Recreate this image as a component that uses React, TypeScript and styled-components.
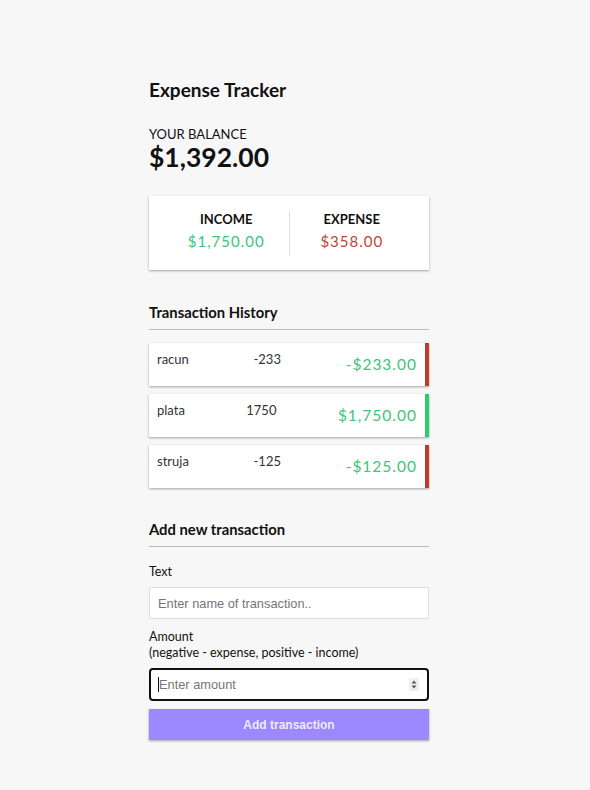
import React from "react";
import styled, { createGlobalStyle } from "styled-components";

const GlobalStyle = createGlobalStyle`
  html, body { margin: 0; padding: 0; }
  body {
    background-color: #f7f7f7;
    font-family: Lato, "Liberation Sans", sans-serif;
    color: #111;
  }
  * { box-sizing: border-box; }
`;

const Page = styled.div`
  display: flex;
  justify-content: center;
  padding: 79px 12px 50px 0;
  min-height: 790px;
`;

const Container = styled.div`
  width: 280px;
  display: flex;
  flex-direction: column;
`;

const Title = styled.h1`
  margin: 0;
  font-size: 19px;
  line-height: 22px;
  font-weight: 700;
  color: #111;
`;

const BalanceLabel = styled.h4`
  margin: 25px 0 0;
  font-size: 13px;
  line-height: 16px;
  font-weight: 400;
  text-transform: uppercase;
  color: #111;
`;

const Balance = styled.h2`
  margin: 0;
  font-size: 26.5px;
  line-height: 30px;
  font-weight: 700;
  color: #111;
`;

const Card = styled.div`
  margin-top: 24px;
  background: #fff;
  box-shadow: 0 1px 3px rgba(0, 0, 0, 0.12), 0 1px 2px rgba(0, 0, 0, 0.24);
  padding: 15px 15px 14px;
  display: flex;
`;

const Column = styled.div<{ $divider?: boolean }>`
  flex: 1;
  text-align: center;
  border-right: ${(p) => (p.$divider ? "1px solid #dedede" : "none")};
`;

const ColumnLabel = styled.h4`
  margin: 0;
  font-size: 13px;
  line-height: 17px;
  font-weight: 700;
  text-transform: uppercase;
  color: #111;
`;

const Money = styled.p<{ $type: "plus" | "minus" }>`
  margin: 4px 0 6px;
  font-size: 15px;
  line-height: 18px;
  letter-spacing: 1px;
  color: ${(p) => (p.$type === "plus" ? "#3cc57a" : "#bd4538")};
`;

const SectionTitle = styled.h3<{ $top: number }>`
  margin: ${(p) => p.$top}px 0 0;
  font-size: 14.8px;
  line-height: 17px;
  font-weight: 700;
  padding-bottom: 8px;
  border-bottom: 1px solid #bbb;
  color: #111;
`;

const List = styled.ul`
  list-style: none;
  padding: 0;
  margin: 13px 0 0;
  display: flex;
  flex-direction: column;
  gap: 8px;
`;

const Item = styled.li<{ $type: "plus" | "minus" }>`
  height: 43px;
  background: #fff;
  box-shadow: 0 1px 3px rgba(0, 0, 0, 0.12), 0 1px 2px rgba(0, 0, 0, 0.24);
  color: #333;
  display: flex;
  justify-content: space-between;
  align-items: flex-start;
  padding: 8px;
  border-right: 4px solid ${(p) => (p.$type === "plus" ? "#2ecc71" : "#c0392b")};
`;

const ItemText = styled.span`
  font-size: 13px;
  line-height: 16px;
  color: #333;
`;

const ItemAmount = styled.span`
  margin-top: 4px;
  font-size: 15.5px;
  line-height: 19px;
  letter-spacing: 1px;
  color: #3cc57a;
`;

const Form = styled.form`
  display: flex;
  flex-direction: column;
`;

const Label = styled.label<{ $top: number }>`
  display: block;
  margin-top: ${(p) => p.$top}px;
  font-size: 12.5px;
  line-height: 16px;
  color: #111;
`;

const TextInput = styled.input`
  display: block;
  width: 100%;
  height: 32px;
  margin-top: 7px;
  border: 1px solid #dedede;
  border-radius: 2px;
  background: #fff;
  padding: 0 8px;
  font-family: "Liberation Sans", Arial, sans-serif;
  font-size: 12.8px;
  color: #111;
  outline: none;
  &::placeholder { color: #757575; }
`;

const NumberWrap = styled.div`
  position: relative;
  margin-top: 7px;
`;

const NumberInput = styled.input`
  display: block;
  width: 100%;
  height: 33px;
  border: 2px solid #101010;
  border-radius: 4px;
  background: #fff;
  padding: 0 30px 0 8px;
  font-family: "Liberation Sans", Arial, sans-serif;
  font-size: 12.8px;
  color: #111;
  outline: none;
  -moz-appearance: textfield;
  &::placeholder { color: #757575; }
  &::-webkit-inner-spin-button,
  &::-webkit-outer-spin-button { -webkit-appearance: none; margin: 0; }
`;

const Caret = styled.span`
  position: absolute;
  left: 9px;
  top: 9px;
  width: 1px;
  height: 15px;
  background: #111;
`;

const Spinner = styled.svg`
  position: absolute;
  right: 10px;
  top: 10px;
`;

const Button = styled.button`
  display: block;
  width: 100%;
  height: 31px;
  margin-top: 8px;
  border: 0;
  background-color: #9c88ff;
  box-shadow: 0 1px 3px rgba(0, 0, 0, 0.12), 0 1px 2px rgba(0, 0, 0, 0.24);
  color: rgba(255, 255, 255, 0.85);
  font-family: "Liberation Sans", Arial, sans-serif;
  font-weight: 700;
  font-size: 12px;
  cursor: pointer;
`;

const transactions = [
  { id: 1, text: "racun", raw: "-233", amount: "-$233.00", type: "minus" as const },
  { id: 2, text: "plata", raw: "1750", amount: "$1,750.00", type: "plus" as const },
  { id: 3, text: "struja", raw: "-125", amount: "-$125.00", type: "minus" as const },
];

export default function App() {
  return (
    <>
      <GlobalStyle />
      <Page>
        <Container>
          <Title>Expense Tracker</Title>
          <BalanceLabel>Your Balance</BalanceLabel>
          <Balance>$1,392.00</Balance>

          <Card>
            <Column $divider>
              <ColumnLabel>Income</ColumnLabel>
              <Money $type="plus">$1,750.00</Money>
            </Column>
            <Column>
              <ColumnLabel>Expense</ColumnLabel>
              <Money $type="minus">$358.00</Money>
            </Column>
          </Card>

          <SectionTitle $top={34}>Transaction History</SectionTitle>
          <List>
            {transactions.map((t) => (
              <Item key={t.id} $type={t.type}>
                <ItemText>{t.text}</ItemText>
                <ItemText>{t.raw}</ItemText>
                <ItemAmount>{t.amount}</ItemAmount>
              </Item>
            ))}
          </List>

          <SectionTitle $top={33}>Add new transaction</SectionTitle>
          <Form onSubmit={(e) => e.preventDefault()}>
            <Label $top={17} htmlFor="text">Text</Label>
            <TextInput id="text" type="text" placeholder="Enter name of transaction.." />
            <Label $top={10} htmlFor="amount">
              Amount
              <br />
              (negative - expense, positive - income)
            </Label>
            <NumberWrap>
              <NumberInput id="amount" type="number" placeholder="Enter amount" />
              <Caret />
              <Spinner width="10" height="13" viewBox="0 0 10 13">
                <rect width="10" height="13" fill="#efefef" />
                <path d="M5 2.5 L7.5 5.5 L2.5 5.5 Z" fill="#555" />
                <path d="M5 10.5 L7.5 7.5 L2.5 7.5 Z" fill="#555" />
              </Spinner>
            </NumberWrap>
            <Button type="submit">Add transaction</Button>
          </Form>
        </Container>
      </Page>
    </>
  );
}
